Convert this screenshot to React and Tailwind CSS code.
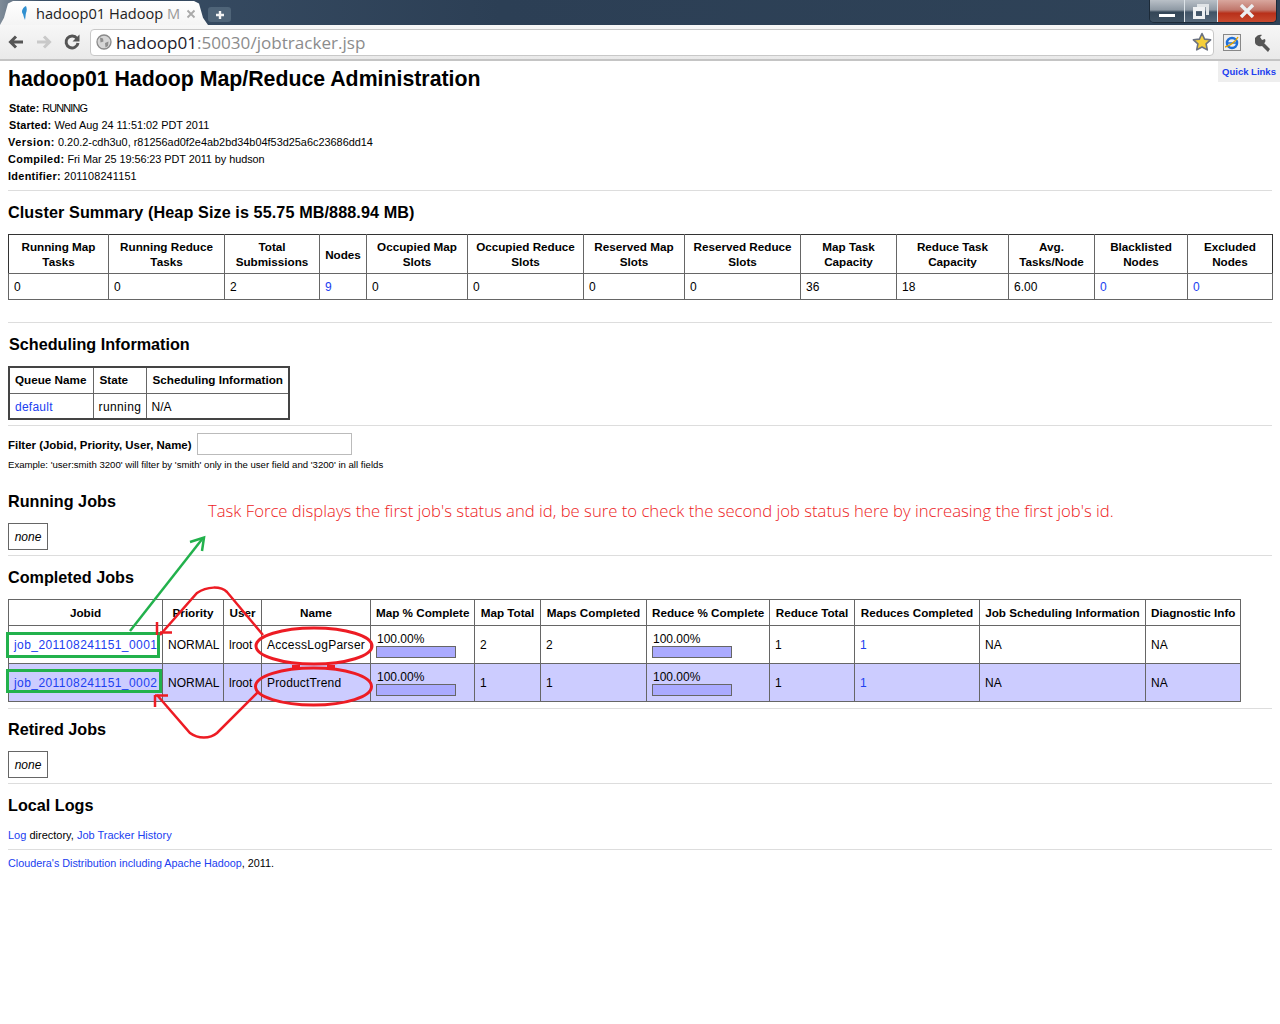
import React from "react";

const F = "[font-family:'Liberation_Sans',Arial,sans-serif]";

const Link = ({ children, className = "" }) => <a className={`text-[#2040f0] ${className}`}>{children}</a>;

function Star() {
  return (
    <svg width="20" height="20" viewBox="0 0 20 20">
      <path d="M10 1.500l2.600 5.600 6 .7-4.500 4.100 1.200 6L10 15l-5.300 2.900 1.200-6L1.400 7.800l6-.7z" fill="#f5cf3a" stroke="#6b7280" strokeWidth="1.600" strokeLinejoin="round" />
    </svg>
  );
}

function Chrome() {
  return (
    <div className="h-[61px] relative">
      <div className="h-[25px] bg-[linear-gradient(90deg,#7e8b98_0px,#3a4f66_40px,#2c3f55_500px,#2f4358_100%)] flex items-end">
        <div className="w-[208px] h-[24px] bg-[linear-gradient(#ffffff,#f4f4f4)] [clip-path:polygon(0_100%,4px_70%,8px_10%,13px_0,194px_0,199px_10%,203px_70%,208px_100%)] flex items-center pl-[18px] text-[#222]">
          <svg width="14" height="16" viewBox="0 0 14 16" className="mr-[4px]">
            <path d="M8 1C4 3 3 7 5 9c.5 2 1 4 2 6 .6-3 .5-5 1-7 1-2 1-5 0-7z" fill="#2f8fd0" />
          </svg>
          <span className="text-[14.600px] leading-[20px] whitespace-nowrap [font-family:'Open_Sans',sans-serif]">hadoop01 Hadoop <span className="text-[#9a9a9a]">M</span></span>
          <svg width="10" height="10" viewBox="0 0 10 10" className="ml-[6px] mt-[2px]">
            <path d="M1.500 1.500l7 7M8.500 1.500l-7 7" stroke="#a9a9a9" strokeWidth="1.800" />
          </svg>
        </div>
        <div className="w-[23px] h-[15px] mb-[3px] rounded-[3px] bg-[#4f6478] flex items-center justify-center">
          <svg width="10" height="10" viewBox="0 0 10 10">
            <path d="M5 1v8M1 5h8" stroke="#f3f3f3" strokeWidth="2.400" />
          </svg>
        </div>
        <div className="flex-1" />
        <div className="absolute right-[3px] top-0 w-[128px] h-[23px] flex rounded-b-[5px] border border-t-0 border-[#1c2a38] overflow-hidden">
          <div className="w-[35px] border-r border-[#dde3e8] bg-[linear-gradient(#b9c0c7,#8e99a4_45%,#344657_55%,#3e5162)] flex items-center justify-center">
            <div className="w-[16px] h-[3px] bg-white mt-[9px]" />
          </div>
          <div className="w-[33px] border-r border-[#dde3e8] bg-[linear-gradient(#b9c0c7,#8e99a4_45%,#405366_55%,#56687a)] flex items-center justify-center">
            <svg width="18" height="17" viewBox="0 0 18 17">
              <path d="M5 1h12v11h-3V4H5z" fill="#dfe3e6" />
              <path fillRule="evenodd" d="M1 4h12v12H1zM4 8v5h6V8z" fill="#eef0f2" />
            </svg>
          </div>
          <div className="flex-1 bg-[linear-gradient(#d9a79e,#c0776c_45%,#b8301a_60%,#c84a2f)] flex items-center justify-center">
            <svg width="16" height="14" viewBox="0 0 16 14">
              <path d="M2 1l12 12M14 1L2 13" stroke="#eceff2" strokeWidth="3.400" />
            </svg>
          </div>
        </div>
      </div>
      <div className="h-[36px] bg-[linear-gradient(#f7f7f7,#e9e9e9)] border-b-2 border-[#c4c4c4] flex items-center pl-[7px]">
        <svg width="18" height="16" viewBox="0 0 18 16">
          <path d="M16 8H4M9 2.500L3.500 8 9 13.500" fill="none" stroke="#555" strokeWidth="3" />
        </svg>
        <svg width="18" height="16" viewBox="0 0 18 16" className="ml-[10px]">
          <path d="M2 8h12M9 2.500L14.500 8 9 13.500" fill="none" stroke="#c9c9c9" strokeWidth="3" />
        </svg>
        <svg width="18" height="18" viewBox="0 0 18 18" className="ml-[10px]">
          <path d="M14 5.500A6 6 0 1 0 15 10" fill="none" stroke="#555" strokeWidth="3" />
          <path d="M16.500 1.500v7h-7z" fill="#555" />
        </svg>
        <div className="ml-[9px] w-[1124px] h-[27px] bg-white rounded-[4px] border border-[#c8c8c8] flex items-center pl-[5px]">
          <svg width="16" height="16" viewBox="0 0 16 16">
            <circle cx="8" cy="8" r="7" fill="#d6d6d6" stroke="#8a8a8a" strokeWidth="1.300" />
            <path d="M4 3.500l3 1 .5 3-3 1zM9 9l3.500-1.500L12 12l-2.500 1.500z" fill="#8f8f8f" />
          </svg>
          <span className="ml-[4px] mt-[1px] text-[17.100px] leading-[24px] [font-family:'Open_Sans',sans-serif] text-[#1b1b2b] whitespace-nowrap">
            hadoop01<span className="text-[#8c8c8c]">:50030/jobtracker.jsp</span>
          </span>
          <div className="flex-1" />
          <div className="mr-[1px]"><Star /></div>
        </div>
        <svg width="20" height="20" viewBox="0 0 20 20" className="ml-[8px]">
          <rect x="1.500" y="2.500" width="17" height="16" fill="#eee" stroke="#888" />
          <circle cx="10" cy="11" r="5" fill="none" stroke="#1f6fd6" strokeWidth="2.500" />
          <path d="M5 11h10" stroke="#1f6fd6" strokeWidth="1.500" />
          <path d="M3 15C8 14 14 9 16 5" fill="none" stroke="#e0a000" strokeWidth="1.300" />
        </svg>
        <svg width="20" height="20" viewBox="0 0 20 20" className="ml-[11px]">
          <path d="M2 6c2-3 5-4 7-3L7 5l2 3 3-1c1 2 0 4-1 4l6 6-2 3-6-6c-3 1-7-1-7-4z" fill="#555" />
        </svg>
      </div>
    </div>
  );
}

const summaryCols = [100, 116, 95, 47, 101, 116, 101, 116, 96, 112, 86, 93, 85];
const summaryHead = [
  ["Running Map", "Tasks"],
  ["Running Reduce", "Tasks"],
  ["Total", "Submissions"],
  ["Nodes"],
  ["Occupied Map", "Slots"],
  ["Occupied Reduce", "Slots"],
  ["Reserved Map", "Slots"],
  ["Reserved Reduce", "Slots"],
  ["Map Task", "Capacity"],
  ["Reduce Task", "Capacity"],
  ["Avg.", "Tasks/Node"],
  ["Blacklisted", "Nodes"],
  ["Excluded", "Nodes"],
];
const summaryVals = ["0", "0", "2", "L9", "0", "0", "0", "0", "36", "18", "6.00", "L0", "L0"];

const jobCols = [154, 61, 38, 109, 104, 66, 106, 123, 85, 125, 166, 95];
const jobHead = ["Jobid", "Priority", "User", "Name", "Map % Complete", "Map Total", "Maps Completed", "Reduce % Complete", "Reduce Total", "Reduces Completed", "Job Scheduling Information", "Diagnostic Info"];

const jobs = [
  { id: "job_201108241151_0001", name: "AccessLogParser", track: "tracking-[0.27px]", mt: "2", mc: "2", bg: "" },
  { id: "job_201108241151_0002", name: "ProductTrend", track: "tracking-[0.17px]", mt: "1", mc: "1", bg: "bg-[#ccf]" },
];

const Cell = "border border-[#666] px-[5px] align-middle";
const Head = "border border-[#666] px-[5px] text-center font-bold align-middle leading-[15px] text-[11.700px]";
const SchedHead = "border border-[#666] pr-[5px] pb-[2px] text-left font-bold align-middle leading-[15px] text-[11.700px] whitespace-nowrap";

function Progress() {
  return (
    <div className="pl-px">
      <div className="leading-[14px]">100.00%</div>
      <div className="-ml-px w-[80px] h-[12px] bg-[#aaf] border border-[#666]" />
    </div>
  );
}

function Section({ className, children }) {
  return <h2 className={`font-bold text-[16.200px] leading-[20px] text-black ${className}`}>{children}</h2>;
}

const Hr = ({ className }) => <div className={`h-px bg-[#ddd] ${className}`} />;

const NoneBox = ({ className }) => (
  <div className={`w-[40px] h-[27px] border border-[#666] flex items-center justify-center italic text-[12px] ${className}`}>none</div>
);

function Annotations() {
  return (
    <svg className="absolute left-0 top-0 pointer-events-none" width="1280" height="1024" viewBox="0 0 1280 1024" fill="none">
      <g stroke="#22b14c" strokeWidth="2.500">
        <path d="M130 631L203 538" />
        <path d="M190 542L204 537.500 202 551" />
      </g>
      <g stroke="#22b14c" strokeWidth="3">
        <rect x="7.500" y="633.500" width="151" height="23" />
        <rect x="7.500" y="670.500" width="153" height="21" />
      </g>
      <g stroke="#ed1c24" strokeWidth="2.500">
        <ellipse cx="314" cy="646" rx="58" ry="18" strokeWidth="3" />
        <ellipse cx="313.500" cy="686.500" rx="58" ry="18.500" strokeWidth="3" />
        <path d="M292 666.500h8M327 666.500h8" strokeWidth="3" />
        <path d="M263 635L227 592C221 586 207 586 197 593L160 635" />
        <path d="M157 622v13M160 632.500h12" />
        <path d="M258 692L217 733C210 739 198 739 190 733L157 695" />
        <path d="M155 695v12M155 695.500h13" />
      </g>
    </svg>
  );
}

export default function App() {
  return (
    <div className={`relative w-[1280px] h-[1024px] bg-white overflow-hidden text-black ${F} text-[12px]`}>
      <Chrome />
      <div className="absolute right-0 top-[61px] w-[62px] h-[21px] pt-[1px] bg-[#eee] flex items-center justify-center text-[#2040f0] font-bold text-[9.500px]">Quick Links</div>
      <div className="px-[8px]">
        <h1 className="mt-[5px] font-bold text-[21.300px] leading-[26px]">hadoop01 Hadoop Map/Reduce Administration</h1>
        <div className="mt-[8px] text-[10.900px] leading-[17px]">
          <div className="pl-px"><b>State:</b> <span className="tracking-[-0.85px]">RUNNING</span></div>
          <div className="pl-px"><b className="tracking-[0.15px]">Started:</b> Wed Aug 24 11:51:02 PDT 2011</div>
          <div><b className="tracking-[0.5px]">Version:</b> 0.20.2-cdh3u0, r81256ad0f2e4ab2bd34b04f53d25a6c23686dd14</div>
          <div><b className="tracking-[0.35px]">Compiled:</b> <span className="tracking-[-0.06px]">Fri Mar 25 19:56:23 PDT 2011 by hudson</span></div>
          <div><b className="tracking-[0.3px]">Identifier:</b> <span className="tracking-[0.15px]">201108241151</span></div>
        </div>
        <Hr className="mt-[5px]" />
        <Section className="mt-[11px] tracking-[0.09px]">Cluster Summary (Heap Size is 55.75 MB/888.94 MB)</Section>
        <table className="mt-[12px] border-collapse table-fixed w-[1264px]">
          <colgroup>{summaryCols.map((w, i) => <col key={i} style={{ width: w }} />)}</colgroup>
          <tbody>
            <tr className="h-[39px]">
              {summaryHead.map((h, i) => (
                <td key={i} className={`${Head} border-t-[#333] first:border-l-[#333] last:border-r-[#333]`}>{h.map((l) => <div key={l} className="whitespace-nowrap">{l}</div>)}</td>
              ))}
            </tr>
            <tr className="h-[26px]">
              {summaryVals.map((v, i) => (
                <td key={i} className={Cell}>{v[0] === "L" ? <Link>{v.slice(1)}</Link> : v}</td>
              ))}
            </tr>
          </tbody>
        </table>
        <Hr className="mt-[22px]" />
        <Section className="mt-[11px] pl-px">Scheduling Information</Section>
        <table className="mt-[12px] border-collapse table-fixed w-[280px] border-2 border-[#444]">
          <colgroup><col className="w-[84px]" /><col className="w-[53px]" /><col className="w-[143px]" /></colgroup>
          <tbody>
            <tr className="h-[26px]">
              <td className={`${SchedHead} pl-[5px]`}>Queue Name</td>
              <td className={`${SchedHead} pl-[6px]`}>State</td>
              <td className={`${SchedHead} pl-[6px]`}>Scheduling Information</td>
            </tr>
            <tr className="h-[26px]">
              <td className={`${Cell} pt-[2px]`}><Link className="tracking-[0.25px]">default</Link></td>
              <td className={`${Cell} pt-[2px] tracking-[0.4px]`}>running</td>
              <td className={`${Cell} pt-[2px]`}>N/A</td>
            </tr>
          </tbody>
        </table>
        <Hr className="mt-[5px]" />
        <div className="mt-[7px] flex items-center h-[22px]">
          <b className="text-[11.450px] mt-[3px]">Filter (Jobid, Priority, User, Name)</b>
          <div className="ml-[6px] w-[155px] h-[22px] border border-[#bbb]" />
        </div>
        <div className="mt-[4px] text-[9.600px] leading-[12px] whitespace-nowrap">Example: 'user:smith 3200' will filter by 'smith' only in the user field and '3200' in all fields</div>
        <Section className="mt-[20px]">Running Jobs</Section>
        <NoneBox className="mt-[12px]" />
        <Hr className="mt-[5px]" />
        <Section className="mt-[11px]">Completed Jobs</Section>
        <table className="mt-[12px] border-collapse table-fixed w-[1232px] border border-[#666]">
          <colgroup>{jobCols.map((w, i) => <col key={i} style={{ width: w }} />)}</colgroup>
          <tbody>
            <tr className="h-[26px]">
              {jobHead.map((h) => <td key={h} className={`${Head} whitespace-nowrap`}>{h}</td>)}
            </tr>
            {jobs.map((j) => (
              <tr key={j.id} className={`h-[38px] ${j.bg}`}>
                <td className={Cell}><Link className="tracking-[0.43px]">{j.id}</Link></td>
                <td className={Cell}>NORMAL</td>
                <td className={Cell}>lroot</td>
                <td className={`${Cell} ${j.track}`}>{j.name}</td>
                <td className={Cell}><Progress /></td>
                <td className={Cell}>{j.mt}</td>
                <td className={Cell}>{j.mc}</td>
                <td className={Cell}><Progress /></td>
                <td className={Cell}>1</td>
                <td className={Cell}><Link>1</Link></td>
                <td className={Cell}>NA</td>
                <td className={Cell}>NA</td>
              </tr>
            ))}
          </tbody>
        </table>
        <Hr className="mt-[6px]" />
        <Section className="mt-[10px]">Retired Jobs</Section>
        <NoneBox className="mt-[12px]" />
        <Hr className="mt-[5px]" />
        <Section className="mt-[11px]">Local Logs</Section>
        <div className="mt-[13px] text-[11px] leading-[14px]"><Link>Log</Link> directory, <Link>Job Tracker History</Link></div>
        <Hr className="mt-[7px]" />
        <div className="mt-[6px] text-[10.800px] leading-[14px]"><Link>Cloudera's Distribution including Apache Hadoop</Link>, 2011.</div>
      </div>
      <div className="absolute left-[208px] top-[501px] text-[16.700px] leading-[20px] text-[#ed1c24] whitespace-nowrap [font-family:'Open_Sans',sans-serif] font-light">Task Force displays the first job's status and id, be sure to check the second job status here by increasing the first job's id.</div>
      <Annotations />
    </div>
  );
}
